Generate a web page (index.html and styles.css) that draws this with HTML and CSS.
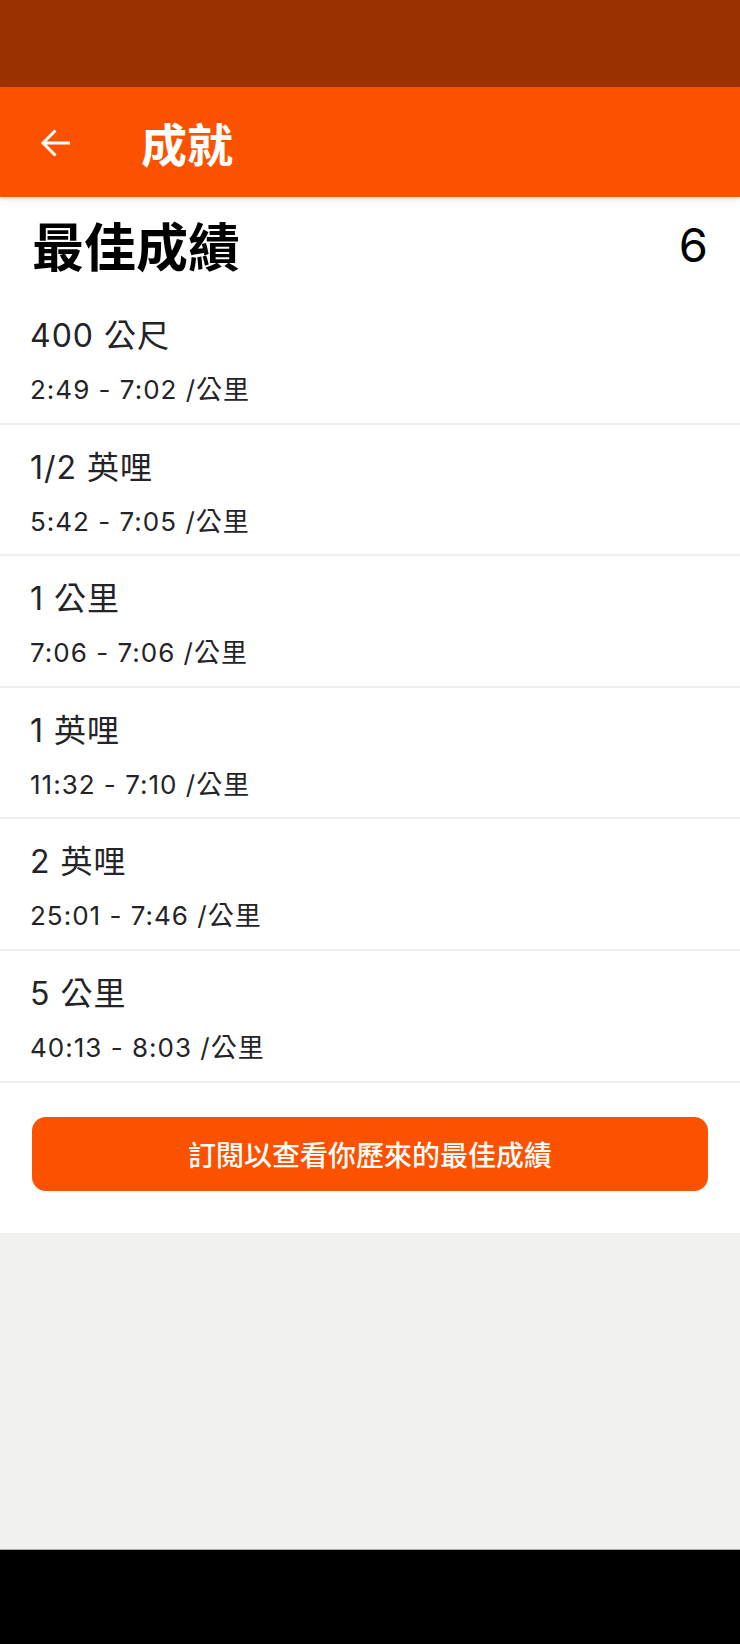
FILE: index.html
```html
<!DOCTYPE html>
<html>

<head>
    <title>成就</title>
    <meta charset="utf-8">
    <link rel="stylesheet" href="styles.css">
</head>

<body>
    <div class="status-bar"></div>

    <!-- Top app bar -->
    <div class="app-bar">
        <svg class="back-icon" width="32" height="32" viewBox="0 0 32 32">
            <path d="M30 16H3.5 M15.5 3.5 L3 16 L15.5 28.5" fill="none" stroke="#fff" stroke-width="3" />
        </svg>
        <h1 class="app-title">成就</h1>
    </div>

    <div class="content">
        <div class="section-header">
            <h2>最佳成績</h2>
            <span class="count">6</span>
        </div>

        <ul class="records">
            <li class="record">
                <div class="record-name">400 公尺</div>
                <div class="record-detail">2:49 - 7:02 /公里</div>
            </li>
            <li class="record">
                <div class="record-name">1/2 英哩</div>
                <div class="record-detail">5:42 - 7:05 /公里</div>
            </li>
            <li class="record">
                <div class="record-name">1 公里</div>
                <div class="record-detail">7:06 - 7:06 /公里</div>
            </li>
            <li class="record">
                <div class="record-name">1 英哩</div>
                <div class="record-detail">11:32 - 7:10 /公里</div>
            </li>
            <li class="record">
                <div class="record-name">2 英哩</div>
                <div class="record-detail">25:01 - 7:46 /公里</div>
            </li>
            <li class="record">
                <div class="record-name">5 公里</div>
                <div class="record-detail">40:13 - 8:03 /公里</div>
            </li>
        </ul>

        <div class="cta">
            <button class="cta-button">訂閱以查看你歷來的最佳成績</button>
        </div>
    </div>

    <div class="filler"></div>
    <div class="nav-bar"></div>
</body>

</html>
```

FILE: styles.css
```css
body {
    margin: 0;
    height: 1644px;
    display: flex;
    flex-direction: column;
    background-color: #f1f1ef;
    font-family: 'Inter', 'Noto Sans CJK TC', sans-serif;
    color: #242428;
}

.status-bar {
    height: 87px;
    background-color: #9a3200;
}

.app-bar {
    height: 110px;
    display: flex;
    align-items: center;
    padding-left: 40px;
    background-color: #fc5200;
    box-shadow: 0 2px 5px rgba(0, 0, 0, 0.15);
    position: relative;
    z-index: 1;
}

.back-icon {
    display: block;
    margin-top: 2px;
}

.app-title {
    margin: 0 0 0 69px;
    font-family: 'Noto Sans CJK TC', sans-serif;
    font-size: 46px;
    font-weight: 700;
    color: #fff;
    line-height: 1;
}

.content {
    background-color: #fff;
    padding-bottom: 42px;
}

.section-header {
    display: flex;
    justify-content: space-between;
    align-items: center;
    height: 62px;
    padding: 17px 32px 17px;
}

.section-header h2 {
    margin: 0;
    font-family: 'Noto Sans CJK TC', sans-serif;
    font-size: 52px;
    font-weight: 700;
    color: #000;
    line-height: 62px;
}

.count {
    font-size: 47px;
    color: #000;
    line-height: 62px;
}

.records {
    list-style: none;
    margin: 0;
    padding: 0;
}

.record {
    padding: 23px 30px 15.6px;
    border-bottom: 2px solid #efefef;
    letter-spacing: 1px;
}

.record-name {
    font-size: 32px;
    line-height: 40px;
}

.record-detail {
    margin-top: 17px;
    font-size: 26px;
    line-height: 34px;
}

.cta {
    padding: 34px 32px 0;
}

.cta-button {
    display: block;
    width: 100%;
    height: 74px;
    border: none;
    border-radius: 14px;
    background-color: #fc5200;
    color: #fff;
    font-family: 'Noto Sans CJK TC', sans-serif;
    font-size: 28px;
    font-weight: 500;
}

.filler {
    flex: 1;
}

.nav-bar {
    height: 94px;
    background-color: #000;
    border-top: 1px solid #a8a8a8;
}
```
